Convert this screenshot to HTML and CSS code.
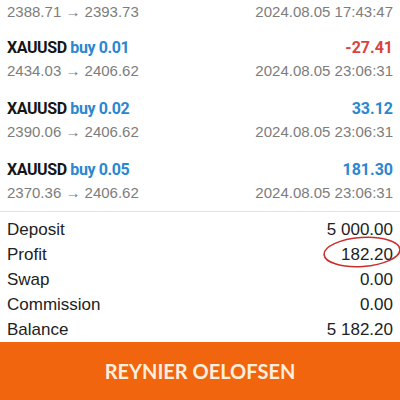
FILE: index.html
```html
<!DOCTYPE html>
<html>
<head>
	<title>Trade history</title>
	<link rel="stylesheet" href="styles.css">
</head>
<body>

	<!-- closed positions (the first one is scrolled off the top) -->
	<div class="deals">
		<div class="deal first">
			<div class="line sub">
				<span>2388.71 → 2393.73</span>
				<span>2024.08.05 17:43:47</span>
			</div>
		</div>
		<div class="deal">
			<div class="line">
				<span class="title">XAUUSD <span class="side">buy 0.01</span></span>
				<span class="pl minus">-27.41</span>
			</div>
			<div class="line sub">
				<span>2434.03 → 2406.62</span>
				<span>2024.08.05 23:06:31</span>
			</div>
		</div>
		<div class="deal">
			<div class="line">
				<span class="title">XAUUSD <span class="side">buy 0.02</span></span>
				<span class="pl plus">33.12</span>
			</div>
			<div class="line sub">
				<span>2390.06 → 2406.62</span>
				<span>2024.08.05 23:06:31</span>
			</div>
		</div>
		<div class="deal">
			<div class="line">
				<span class="title">XAUUSD <span class="side">buy 0.05</span></span>
				<span class="pl plus">181.30</span>
			</div>
			<div class="line sub">
				<span>2370.36 → 2406.62</span>
				<span>2024.08.05 23:06:31</span>
			</div>
		</div>
	</div>

	<!-- totals -->
	<div class="summary">
		<div class="row"><span>Deposit</span><span>5 000.00</span></div>
		<div class="row">
			<span>Profit</span>
			<span class="marked">182.20<svg class="ring" width="82" height="36" viewBox="0 0 82 36">
					<ellipse cx="41" cy="18" rx="38" ry="14.5" fill="none" stroke="#c9302c" stroke-width="1.6" transform="rotate(-4 41 18)"/>
				</svg></span>
		</div>
		<div class="row"><span>Swap</span><span>0.00</span></div>
		<div class="row"><span>Commission</span><span>0.00</span></div>
		<div class="row"><span>Balance</span><span>5 182.20</span></div>
	</div>

	<div class="banner">REYNIER OELOFSEN</div>

</body>
</html>
```

FILE: styles.css
```css
body {
	margin: 0;
	background: #fff;
	font-family: "Liberation Sans", Arial, sans-serif;
	color: #1c1c1c;
	overflow: hidden;
}

.deals {
	border-bottom: 1px solid #e2e2e2;
}
.deal {
	padding: 8px 7px 7px 7px;
}
.deal.first {
	padding-top: 0;
	padding-bottom: 5px;
}
.line {
	display: flex;
	justify-content: space-between;
	align-items: center;
	height: 23px;
}
.title {
	font-family: Roboto, sans-serif;
	font-weight: bold;
	font-size: 16px;
	letter-spacing: -0.4px;
	color: #161616;
}
.side {
	color: #2b87d1;
}
.pl {
	font-family: Roboto, sans-serif;
	font-weight: bold;
	font-size: 16px;
}
.plus {
	color: #2b87d1;
}
.minus {
	color: #d8443d;
}
.sub {
	font-size: 15px;
	color: #7d7d7d;
}

.summary {
	padding: 5px 7px 0 7px;
}
.row {
	display: flex;
	justify-content: space-between;
	align-items: center;
	height: 25px;
	font-size: 17px;
	color: #222;
}
.marked {
	position: relative;
}
.ring {
	position: absolute;
	left: -20px;
	top: -11px;
}

.banner {
	height: 58px;
	background: #f1650f;
	color: #fdeedd;
	font-family: Lato, sans-serif;
	font-weight: bold;
	font-size: 20px;
	display: flex;
	align-items: center;
	justify-content: center;
}
```
